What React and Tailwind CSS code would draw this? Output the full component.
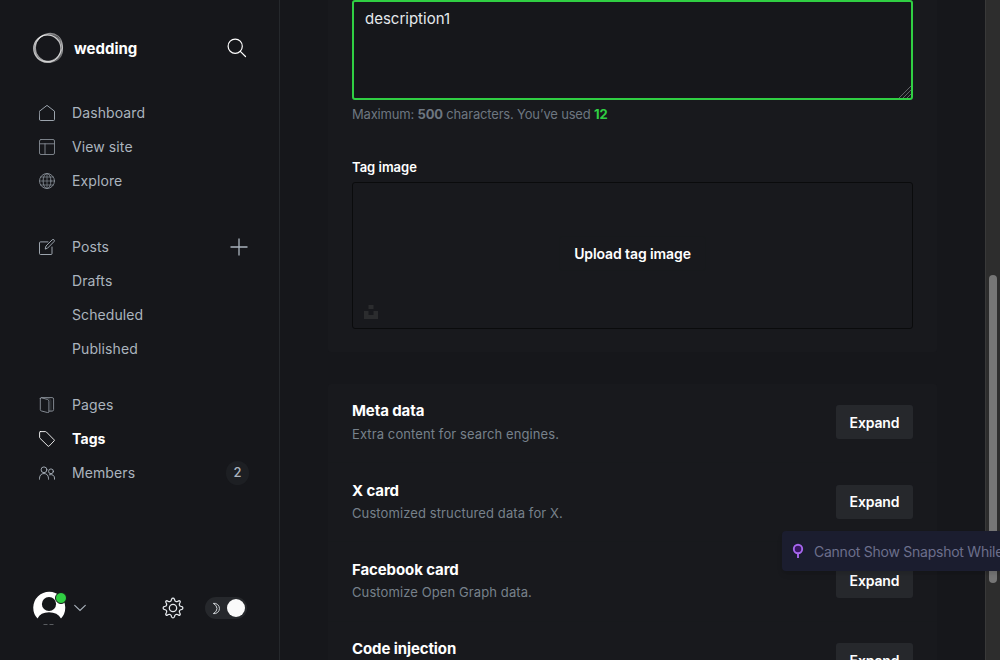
import React from "react";

function Icon({ children, className = "" }) {
  return (
    <svg viewBox="0 0 16 16" fill="none" stroke="currentColor" strokeWidth="0.9" strokeLinecap="round" strokeLinejoin="round" className={`h-4 w-4 shrink-0 ${className}`}>
      {children}
    </svg>
  );
}

const icons = {
  home: <path d="M.5 6.200 8 .4l7.500 5.800v8.300a1 1 0 0 1-1 1h-13a1 1 0 0 1-1-1z" />,
  site: <g opacity=".75"><rect x=".5" y=".5" width="15" height="15" rx="1.500" /><path d="M.5 4.800h15M6 4.800v10.700" /></g>,
  globe: <g opacity=".75"><circle cx="8" cy="8" r="7.500" /><ellipse cx="8" cy="8" rx="3.900" ry="7.500" /><path d="M8 .5v15M.5 8h15M1.700 4h12.600M1.700 12h12.600" strokeWidth=".7" /></g>,
  posts: <><path d="M9 2.900H1.500a1 1 0 0 0-1 1v10.600a1 1 0 0 0 1 1H12a1 1 0 0 0 1-1V8" /><path d="m6.300 9.700.7-2.700L13.200.8q1-.7 1.800 0 .8.900 0 1.800L8.800 8.900z" /></>,
  pages: <g opacity=".8"><path d="M1.300 1.500v11.200q0 .9.900 1.200l6.500 1.700q1.200.3 1.200-1V4.200Q9.900 3 8.700 2.500L2.500.8q-1.200-.3-1.200.7ZM2.300.6h10.800q1.500 0 1.500 1.500v10.500q0 1.500-1.500 1.500H10" /><path d="M7 .7q4.900.7 4.900 3v10.300" opacity=".35" /></g>,
  tags: <path d="M1.300.6h5.200q.5 0 .8.300l7.800 7.900q.6.600 0 1.100l-5 5.200q-.6.500-1.100 0L.9 7.200q-.3-.3-.3-.8V1.300q0-.7.7-.7Z" />,
  members: <><circle cx="5" cy="4.800" r="2.900" /><path d="M.5 14.200v-1Q.8 8.700 5 8.500q4.100.2 4.500 4.700v1" /><circle cx="12" cy="6.300" r="2.400" /><path d="M10.500 9.700Q15.200 8.900 15.500 13v1.200" /></>,
};

function NavItem({ icon, label, active, children }) {
  return (
    <a className={`flex h-[34px] items-center pl-[39px] pr-[31px] text-[14px] ${active ? "font-bold text-white tracking-[0.1px]" : "text-[#abb4be] tracking-[0.1px]"}`}>
      <span className="flex w-[33px]">{icon && <Icon>{icons[icon]}</Icon>}</span>
      <span className="flex-1 pb-[2px]">{label}</span>
      {children}
    </a>
  );
}

function Sidebar() {
  return (
    <nav className="flex h-full w-[280px] shrink-0 flex-col border-r border-[#25282c]">
      <header className="flex h-[96px] items-center pl-8 pr-8">
        <svg viewBox="0 0 32 32" className="h-8 w-8" fill="none" stroke="#fff">
          <circle cx="15.300" cy="16.600" r="13.600" strokeWidth="1.200" opacity=".7" />
          <ellipse cx="17" cy="16" rx="14.200" ry="13.200" strokeWidth="1.100" opacity=".4" transform="rotate(40 16 16)" />
          <ellipse cx="16" cy="15.200" rx="13" ry="14.700" strokeWidth="1.100" opacity=".5" transform="rotate(40 16 16)" />
          <circle cx="17" cy="15.800" r="13.600" strokeWidth="1" opacity=".4" />
        </svg>
        <span className="ml-[10px] flex-1 pt-[2px] text-[15px] font-bold text-white">wedding</span>
        <svg viewBox="0 0 20 20" className="h-5 w-5" fill="none" stroke="#fff" strokeWidth="1.200" strokeLinecap="round">
          <circle cx="8.200" cy="8.200" r="7.100" /><path d="m13.300 13.300 5.200 5.200" />
        </svg>
      </header>
      <div>
        <NavItem icon="home" label="Dashboard" />
        <NavItem icon="site" label="View site" />
        <NavItem icon="globe" label="Explore" />
      </div>
      <div className="mt-8">
        <NavItem icon="posts" label="Posts">
          <svg viewBox="0 0 18 18" className="h-[18px] w-[18px]" stroke="#abb4be" strokeWidth="1.300"><path d="M9 .5v17M.5 9h17" /></svg>
        </NavItem>
        <NavItem label="Drafts" />
        <NavItem label="Scheduled" />
        <NavItem label="Published" />
      </div>
      <div className="mt-[22px]">
        <NavItem icon="pages" label="Pages" />
        <NavItem icon="tags" label="Tags" active />
        <NavItem icon="members" label="Members">
          <span className="-mr-px flex h-6 w-[23px] items-center justify-center rounded-full bg-[#1d1f23] text-[13px] font-medium tracking-normal">2</span>
        </NavItem>
      </div>
      <footer className="mb-[34px] mt-auto flex h-9 items-center pl-8 pr-8">
        <div className="relative h-[34px] w-[34px]">
          <svg viewBox="0 0 34 34" className="h-[34px] w-[34px]">
            <path d="M5.500 27.500A16 16 0 1 1 29 27.500Q25.500 21.200 17 21.200T5.500 27.500Z" fill="#fff" />
            <circle cx="17" cy="13" r="7.100" fill="#15171a" />
            <path d="M11.500 33.500h4m2 0h4" stroke="#777a7e" strokeWidth=".7" />
          </svg>
          <span className="absolute left-[23px] top-px h-[12px] w-[12px] rounded-full border border-[#15171a] bg-[#30cf43]" />
        </div>
        <svg viewBox="0 0 12 8" className="ml-2 h-2 w-3" fill="none" stroke="#abb4be" strokeWidth="1.100" strokeLinecap="round"><path d="m.7 1.300 5.300 5.200 5.300-5.200" /></svg>
        <svg viewBox="0 0 24 24" className="ml-auto h-[22px] w-[22px]" fill="none" stroke="#e5e9ed" strokeWidth="1.400" strokeLinejoin="round">
          <circle cx="12" cy="12" r="4" />
          <path d="m13.500 2.300.4 1.300a2.200 2.200 0 0 0 3 1.300l1.300-.7a1.200 1.200 0 0 1 1.600 1.600l-.7 1.300a2.200 2.200 0 0 0 1.300 3l1.300.4a1.600 1.600 0 0 1 0 3l-1.300.4a2.200 2.200 0 0 0-1.300 3l.7 1.300a1.200 1.200 0 0 1-1.600 1.600l-1.300-.7a2.200 2.200 0 0 0-3 1.300l-.4 1.300a1.600 1.600 0 0 1-3 0l-.4-1.300a2.200 2.200 0 0 0-3-1.300l-1.300.7a1.200 1.200 0 0 1-1.600-1.600l.7-1.300a2.200 2.200 0 0 0-1.300-3l-1.300-.4a1.600 1.600 0 0 1 0-3l1.300-.4a2.200 2.200 0 0 0 1.300-3l-.7-1.300a1.200 1.200 0 0 1 1.600-1.600l1.300.7a2.200 2.200 0 0 0 3-1.300l.4-1.300a1.600 1.600 0 0 1 3 0Z" />
        </svg>
        <div className="ml-[21px] flex h-[22px] w-[42px] items-center justify-between rounded-full bg-[#26282c] pl-[7px] pr-[2px]">
          <svg viewBox="0 0 10 14" className="h-[13px] w-[10px]" fill="none" stroke="#d9dde1" strokeLinejoin="round"><path d="M1 1.500a5.600 5.600 0 1 1 0 11Q5 10.500 5 7T1 1.500Z" /></svg>
          <span className="h-[18px] w-[18px] rounded-full bg-[#fafafa]" />
        </div>
      </footer>
    </nav>
  );
}

const sections = [
  ["Meta data", "Extra content for search engines."],
  ["X card", "Customized structured data for X."],
  ["Facebook card", "Customize Open Graph data."],
  ["Code injection", "Add styles/scripts to the header & footer."],
];

function Section({ title, text }) {
  return (
    <div className="flex h-[79.400px] shrink-0 items-start justify-between border-b border-[#17191c] px-6 pt-[17.700px]">
      <div>
        <h4 className="text-[15px] font-bold leading-5 tracking-[-0.1px] text-white">{title}</h4>
        <p className="mt-[2.300px] text-[13px] leading-5 tracking-[0.1px] text-[#77818b]">{text}</p>
      </div>
      <button className="mt-[3.900px] h-[34px] w-[77px] rounded-[3px] bg-[#26282c] text-[14px] font-semibold tracking-[-0.15px] text-white">Expand</button>
    </div>
  );
}

export default function App() {
  return (
    <div className="relative flex h-[660px] w-[1000px] overflow-hidden bg-[#16171b] font-['Inter',sans-serif]">
      <Sidebar />
      <main className="flex min-w-0 flex-1 flex-col pl-12 pr-12">
        <section className="h-[352px] w-[609px] shrink-0 rounded-b-[3px] bg-[#18191d] px-6">
          <div className="flex h-[100px] w-[561px] justify-between rounded-[3px] border-2 border-[#30cf43] bg-[#16171b] pl-[11px] pt-[7px] text-[15px] leading-5 text-[#e5e9ed]">
            <span>description1</span>
            <svg viewBox="0 0 12 12" className="h-3 w-3 self-end" stroke="#76787b" strokeWidth=".8"><path d="M0 12 12 0M4 12l8-8M8 12l4-4" /></svg>
          </div>
          <p className="mt-1 text-[13px] leading-5 tracking-[-0.180px] text-[#6d7680]">Maximum: <b>500</b> characters. You’ve used <b className="text-[#30cf43]">12</b></p>
          <h5 className="mt-[33px] text-[13px] font-semibold leading-5 text-white">Tag image</h5>
          <div className="mt-[5px] flex h-[147px] w-[561px] flex-col rounded-[3px] border border-[#0a0b0c] px-[11px] pb-[9px] pt-[53px]">
            <button className="h-[35px] w-[147px] self-center rounded-[3px] border border-[#17191c] text-[14px] font-semibold tracking-[-0.1px] text-white">Upload tag image</button>
            <svg viewBox="0 0 14 14" className="mt-auto h-[14px] w-[14px]" fill="#2b2c2e"><path d="M4.500 0h5v4h-5zM0 6h4.500v4h5V6H14v8H0z" /></svg>
          </div>
        </section>
        <section className="mt-8 h-[320px] w-[609px] shrink-0 rounded-t-[3px] bg-[#18191d]">
          <div className="-mt-[0.400px]">
            {sections.map(([title, text]) => <Section key={title} title={title} text={text} />)}
          </div>
        </section>
      </main>
      <aside className="h-full w-[15px] shrink-0 border-l border-[#393939] bg-[#2d2d2d] pl-[3px] pt-[275px]">
        <div className="h-[308px] w-2 rounded-full bg-[#767676]" />
      </aside>
      <div className="absolute left-[782px] top-[531px] flex h-10 w-[260px] items-center rounded-[4px] bg-[#1b1d2f] pl-[10px] text-[14px] text-[#6c6f8c] shadow-md">
        <svg viewBox="0 0 12 16" className="mr-[10px] h-4 w-3 shrink-0" fill="none" stroke="#a666ed" strokeWidth="1.900"><circle cx="6" cy="6" r="4.200" fill="#391763" /><path d="M6 10v5" /></svg>
        <span className="whitespace-nowrap pt-px tracking-[-0.250px]">Cannot Show Snapshot While</span>
      </div>
    </div>
  );
}
